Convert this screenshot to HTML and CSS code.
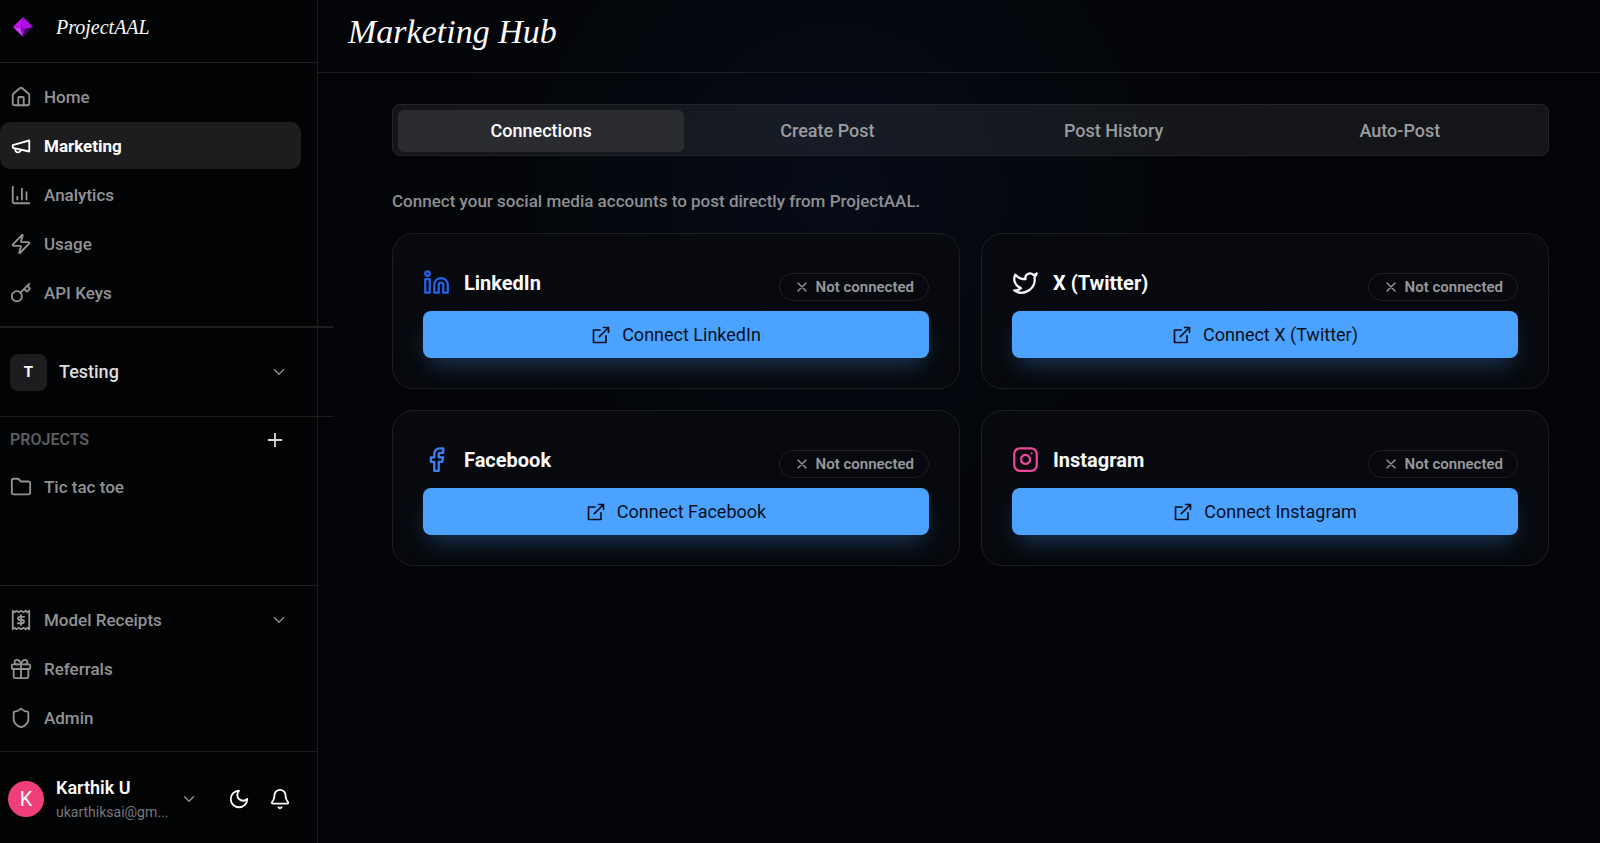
FILE: index.html
```html
<!DOCTYPE html>
<html lang="en">
<head>
<meta charset="utf-8">
<title>Marketing Hub</title>
<meta name="viewport" content="width=device-width, initial-scale=1">
<link rel="stylesheet" href="styles.css">
</head>
<body>
<svg class="sprite" aria-hidden="true">
  <symbol id="chevron" viewBox="0 0 24 24"><path d="m6 9 6 6 6-6"/></symbol>
  <symbol id="cross" viewBox="0 0 24 24"><path d="M18 6 6 18M6 6l12 12"/></symbol>
  <symbol id="external" viewBox="0 0 24 24"><path d="M15 3h6v6M10 14 21 3M18 13v8H3V6h8"/></symbol>
</svg>
<div class="app">
  <aside class="sidebar">
    <div class="brand">
      <svg class="gem" viewBox="0 0 20 20" aria-hidden="true">
        <path fill="#c414f5" d="M10 0 0 10l8 1z"/>
        <path fill="#b00fea" d="M10 0 8 11l4 1 8-2z"/>
        <path fill="#d03cff" d="M0 10l8 1 2 9z"/>
        <path fill="#8a0fc4" d="M8 11l4 1-2 8z"/>
        <path fill="#3d0560" d="M12 12l8-2-10 10z"/>
      </svg>
      <a class="brand-name" href="#">ProjectAAL</a>
    </div>
    <nav class="nav">
      <a class="item" href="#"><svg class="icon" viewBox="0 0 24 24"><path d="M15 21v-8a1 1 0 0 0-1-1h-4a1 1 0 0 0-1 1v8"/><path d="M3 10a2 2 0 0 1 .7-1.5l7-6a2 2 0 0 1 2.6 0l7 6A2 2 0 0 1 21 10v9a2 2 0 0 1-2 2H5a2 2 0 0 1-2-2z"/></svg>Home</a>
      <a class="item active" href="#" aria-current="page"><svg class="icon" viewBox="0 0 24 24"><path d="m3 11 18-5v12L3 14v-3z"/><path d="M11.6 16.8a3 3 0 1 1-5.8-1.6"/></svg>Marketing</a>
      <a class="item" href="#"><svg class="icon" viewBox="0 0 24 24"><path d="M3 3v16a2 2 0 0 0 2 2h16M18 17V9M13 17V5M8 17v-3"/></svg>Analytics</a>
      <a class="item" href="#"><svg class="icon" viewBox="0 0 24 24"><path d="M4 14a1 1 0 0 1-.78-1.63l9.9-10.2a.5.5 0 0 1 .86.46l-1.92 6.02A1 1 0 0 0 13 10h7a1 1 0 0 1 .78 1.63l-9.9 10.2a.5.5 0 0 1-.86-.46l1.92-6.02A1 1 0 0 0 11 14z"/></svg>Usage</a>
      <a class="item" href="#"><svg class="icon" viewBox="0 0 24 24"><circle cx="7.5" cy="15.5" r="5.5"/><path d="M11.4 11.6 21 2M15.5 7.5l2.3 2.3a1 1 0 0 0 1.4 0l2.1-2.1a1 1 0 0 0 0-1.4L19 4"/></svg>API Keys</a>
    </nav>
    <button class="workspace" type="button">
      <span class="tile">T</span><span class="workspace-name">Testing</span>
      <svg class="chev" aria-hidden="true"><use href="#chevron"/></svg>
    </button>
    <section class="projects">
      <div class="projects-head">
        <h2>PROJECTS</h2>
        <button class="add" type="button" aria-label="Add project"><svg class="icon" viewBox="0 0 24 24"><path d="M5 12h14M12 5v14"/></svg></button>
      </div>
      <a class="item" href="#"><svg class="icon" viewBox="0 0 24 24"><path d="M22 18a2 2 0 0 1-2 2H4a2 2 0 0 1-2-2V5a2 2 0 0 1 2-2h5l3 3h8a2 2 0 0 1 2 2z"/></svg>Tic tac toe</a>
    </section>
    <nav class="nav secondary">
      <button class="item" type="button"><svg class="icon" viewBox="0 0 24 24"><path d="M3 2l2 1.500 2-1.500 2.500 1.500L12 2l2.500 1.500L17 2l2 1.500L21 2v20l-2-1.500-2 1.500-2.500-1.500L12 22l-2.500-1.500L7 22l-2-1.500L3 22z"/><path d="M15.500 8.500h-5a1.750 1.750 0 0 0 0 3.500h3a1.750 1.750 0 0 1 0 3.500h-5M12 6.500v11"/></svg>Model Receipts<svg class="chev" aria-hidden="true"><use href="#chevron"/></svg></button>
      <a class="item" href="#"><svg class="icon" viewBox="0 0 24 24"><rect x="2" y="7" width="20" height="5" rx="1"/><path d="M12 7v15M20 12v8a2 2 0 0 1-2 2H6a2 2 0 0 1-2-2v-8M7.500 7a2.500 2.500 0 0 1 0-5A4.800 8 0 0 1 12 7a4.800 8 0 0 1 4.500-5 2.500 2.500 0 0 1 0 5"/></svg>Referrals</a>
      <a class="item" href="#"><svg class="icon" viewBox="0 0 24 24"><path d="M20 13c0 5-3.500 7.500-7.660 8.950a1 1 0 0 1-.67-.01C7.500 20.500 4 18 4 13V6a1 1 0 0 1 1-1c2 0 4.500-1.200 6.240-2.720a1.170 1.170 0 0 1 1.520 0C14.510 3.810 17 5 19 5a1 1 0 0 1 1 1z"/></svg>Admin</a>
    </nav>
    <footer class="account">
      <button class="profile" type="button">
        <span class="avatar">K</span>
        <span class="who"><span class="who-name">Karthik U</span><span class="who-mail">ukarthiksai@gm...</span></span>
        <svg class="chev" aria-hidden="true"><use href="#chevron"/></svg>
      </button>
      <button class="tool" type="button" aria-label="Theme"><svg class="icon" viewBox="0 0 24 24"><path d="M12 3a6 6 0 0 0 9 9 9 9 0 1 1-9-9z"/></svg></button>
      <button class="tool" type="button" aria-label="Notifications"><svg class="icon" viewBox="0 0 24 24"><path d="M10.300 21a2 2 0 0 0 3.400 0M3.300 15.300A1 1 0 0 0 4 17h16a1 1 0 0 0 .74-1.670C19.400 13.900 18 12.500 18 8A6 6 0 0 0 6 8c0 4.500-1.400 5.900-2.700 7.300z"/></svg></button>
    </footer>
  </aside>
  <main class="main">
    <header class="topbar"><h1>Marketing Hub</h1></header>
    <div class="content">
      <div class="tabs" role="tablist">
        <button class="tab selected" type="button" role="tab" aria-selected="true">Connections</button>
        <button class="tab" type="button" role="tab" aria-selected="false">Create Post</button>
        <button class="tab" type="button" role="tab" aria-selected="false">Post History</button>
        <button class="tab" type="button" role="tab" aria-selected="false">Auto-Post</button>
      </div>
      <p class="intro">Connect your social media accounts to post directly from ProjectAAL.</p>
      <div class="cards">
        <article class="card">
          <div class="card-head">
            <svg class="logo linkedin" viewBox="0 0 24 24"><path d="M16 8a6 6 0 0 1 6 6v7h-4v-7a2 2 0 0 0-4 0v7h-4v-7a6 6 0 0 1 6-6z"/><rect x="2" y="9" width="4" height="12"/><circle cx="4" cy="4" r="2"/></svg>
            <h3>LinkedIn</h3>
            <span class="badge"><svg aria-hidden="true"><use href="#cross"/></svg>Not connected</span>
          </div>
          <button class="connect" type="button"><svg aria-hidden="true"><use href="#external"/></svg>Connect LinkedIn</button>
        </article>
        <article class="card">
          <div class="card-head">
            <svg class="logo twitter" viewBox="0 0 24 24"><path d="M22 4s-.7 2.100-2 3.400c1.600 10-9.400 17.300-18 11.600 2.200.1 4.400-.6 6-2C3 15.500.5 9.600 3 5c2.200 2.600 5.600 4.100 9 4-.9-4.200 4-6.600 7-3.800 1.100 0 3-1.200 3-1.200z"/></svg>
            <h3>X (Twitter)</h3>
            <span class="badge"><svg aria-hidden="true"><use href="#cross"/></svg>Not connected</span>
          </div>
          <button class="connect" type="button"><svg aria-hidden="true"><use href="#external"/></svg>Connect X (Twitter)</button>
        </article>
        <article class="card">
          <div class="card-head">
            <svg class="logo facebook" viewBox="0 0 24 24"><path d="M18 2h-3a5 5 0 0 0-5 5v3H7v4h3v8h4v-8h3l1-4h-4V7a1 1 0 0 1 1-1h3z"/></svg>
            <h3>Facebook</h3>
            <span class="badge"><svg aria-hidden="true"><use href="#cross"/></svg>Not connected</span>
          </div>
          <button class="connect" type="button"><svg aria-hidden="true"><use href="#external"/></svg>Connect Facebook</button>
        </article>
        <article class="card">
          <div class="card-head">
            <svg class="logo instagram" viewBox="0 0 24 24"><rect x="2" y="2" width="20" height="20" rx="5"/><path d="M16 11.370A4 4 0 1 1 12.630 8 4 4 0 0 1 16 11.370zM17.500 6.500h.01"/></svg>
            <h3>Instagram</h3>
            <span class="badge"><svg aria-hidden="true"><use href="#cross"/></svg>Not connected</span>
          </div>
          <button class="connect" type="button"><svg aria-hidden="true"><use href="#external"/></svg>Connect Instagram</button>
        </article>
      </div>
    </div>
  </main>
</div>
</body>
</html>
```
FILE: styles.css
```css
* { box-sizing: border-box; }

body {
  margin: 0;
  background: #030407;
  color: #fafafa;
  font: 400 18px/24px Roboto, sans-serif;
}

h1, h2, h3, p { margin: 0; }
a { color: inherit; text-decoration: none; }

button {
  padding: 0;
  border: 0;
  background: none;
  color: inherit;
  font: inherit;
  text-align: left;
  cursor: pointer;
}

svg {
  flex: none;
  fill: none;
  stroke: currentColor;
  stroke-width: 2;
  stroke-linecap: round;
  stroke-linejoin: round;
}

.sprite { display: none; }
.icon { width: 22px; height: 22px; }
.chev { width: 18px; height: 18px; color: #8b8b8e; }

.app {
  display: grid;
  grid-template-columns: 318px 1fr;
  min-height: 100vh;
}

.sidebar {
  display: flex;
  flex-direction: column;
  border-right: 1px solid #1d1e20;
  background: #020305;
  position: relative;
}

.brand {
  display: flex;
  align-items: center;
  gap: 23px;
  height: 63px;
  padding: 0 13px 8px;
  border-bottom: 1px solid #1d1e20;
}
.gem { width: 20px; height: 20px; stroke: none; }
.brand-name { font: italic 400 20px/32px "Liberation Serif", serif; }

.nav {
  display: flex;
  flex-direction: column;
  gap: 2px;
  padding: 10px 16px 10px 0;
}
.item {
  display: flex;
  align-items: center;
  gap: 12px;
  height: 47px;
  padding: 0 13px 0 10px;
  border-radius: 0 10px 10px 0;
  color: #929294;
  font-size: 17px;
  font-weight: 500;
}
.item.active {
  border-radius: 10px;
  background: #1d1d1f;
  color: #fff;
  font-weight: 700;
}
.item .chev { margin-left: auto; }

.workspace {
  display: flex;
  align-items: center;
  gap: 12px;
  height: 91px;
  margin-right: -16px;
  padding: 0 45px 0 10px;
  border-top: 2px solid #1d1e20;
  border-bottom: 1px solid #1d1e20;
}
.workspace-name { font-weight: 500; color: #dededf; }
.workspace .chev { margin-left: auto; }
.tile {
  display: grid;
  place-items: center;
  width: 37px;
  height: 37px;
  border-radius: 8px;
  background: #1d1d1f;
  font-size: 15px;
  font-weight: 700;
}

.projects { flex: 1; padding-right: 16px; }
.projects-head {
  display: flex;
  align-items: center;
  justify-content: space-between;
  height: 46px;
  padding: 0 15px 0 10px;
}
.projects-head h2 {
  color: #5c5d60;
  font-size: 16px;
  font-weight: 600;
}
.add { display: flex; color: #d8d8d8; }

.secondary { border-top: 1px solid #1d1e20; }

.account {
  display: flex;
  align-items: center;
  gap: 19px;
  height: 92px;
  padding: 2px 26px 0 8px;
  border-top: 1px solid #1d1e20;
}
.profile {
  display: flex;
  flex: 1;
  align-items: center;
  gap: 12px;
  min-width: 0;
}
.avatar {
  display: grid;
  place-items: center;
  width: 36px;
  height: 36px;
  border-radius: 50%;
  background: #f03e78;
  font-size: 20px;
}
.who { display: flex; flex-direction: column; padding-top: 2px; }
.who-name { font-weight: 600; }
.who-mail { color: #77787a; font-size: 14px; }
.tool { display: flex; }

.main {
  background: radial-gradient(circle at 520px 190px, #060b18 0, #04070d 220px, #030407 440px);
}
.topbar {
  height: 73px;
  padding: 8px 30px 0;
  border-bottom: 1px solid #1d1e20;
}
h1 { font: italic 400 34px/48px "Liberation Serif", serif; }

.content { padding: 31px 51px 40px 74px; }

.tabs {
  display: grid;
  grid-template-columns: repeat(4, 1fr);
  height: 52px;
  padding: 5px 5px 3px;
  border: 1px solid #232528;
  border-radius: 8px;
  background: rgba(255, 255, 255, .07);
}
.tab {
  border-radius: 6px;
  color: #9b9c9e;
  font-weight: 500;
  text-align: center;
}
.tab.selected { background: #2a2c30; color: #fff; }

.intro {
  padding: 33px 0 20px;
  color: #8e8f92;
  font-size: 17px;
  font-weight: 500;
}

.cards {
  display: grid;
  grid-template-columns: repeat(2, 1fr);
  gap: 21px;
}
.card {
  padding: 30px;
  border: 1px solid #1c1e21;
  border-radius: 21px;
  background: linear-gradient(#080a10, #06080c);
}
.card-head {
  display: flex;
  align-items: center;
  height: 37px;
  margin-bottom: 10px;
}
.logo { width: 27px; height: 27px; }
.linkedin { color: #2563eb; }
.facebook { color: #3b82f6; }
.instagram { color: #ec4899; }
h3 {
  margin-left: 14px;
  font-size: 20px;
  font-weight: 700;
}
.badge {
  display: flex;
  align-items: center;
  align-self: flex-end;
  gap: 6px;
  height: 28px;
  margin-left: auto;
  padding: 0 14px;
  border: 1px solid #1e2023;
  border-radius: 14px;
  color: #98999c;
  font-size: 15px;
  font-weight: 600;
}
.badge svg { width: 16px; height: 16px; }

.connect {
  display: flex;
  align-items: center;
  justify-content: center;
  gap: 11px;
  width: 100%;
  height: 47px;
  border-radius: 8px;
  background: #4ba3ff;
  box-shadow: 0 12px 24px -6px rgba(75, 163, 255, .32);
  color: #07101e;
}
.connect svg { width: 20px; height: 20px; }
```
